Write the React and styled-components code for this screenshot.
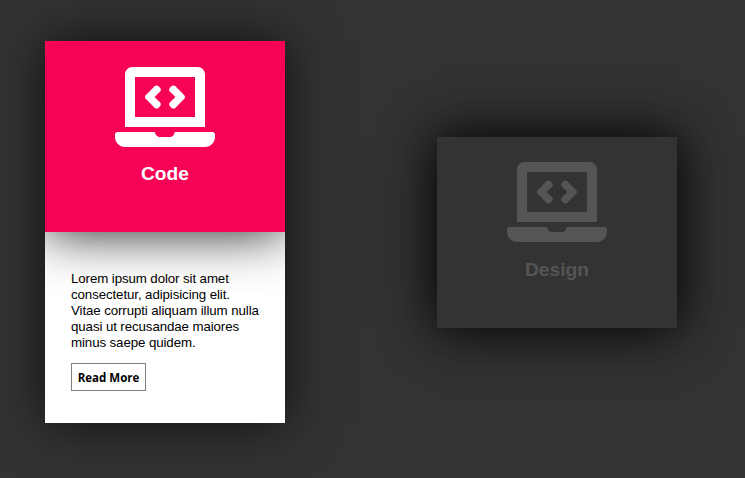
import React from "react";
import styled, { createGlobalStyle } from "styled-components";
import { FaLaptopCode } from "react-icons/fa";

const GlobalStyle = createGlobalStyle`
  * { margin: 0; padding: 0; box-sizing: border-box; }
  body { background: #333; font-family: "Liberation Sans", Arial, sans-serif; }
`;

const Page = styled.main`
  display: flex;
  align-items: center;
  gap: 152px;
  width: 745px;
  height: 478px;
  padding: 0 0 14px 45px;
  overflow: hidden;
`;

const Card = styled.article`
  width: 240px;
  flex: none;
  box-shadow: 0 0 50px rgba(0, 0, 0, ${(p) => (p.$open ? 0.72 : 0.3)});
`;

const Face = styled.header`
  position: relative;
  z-index: 1;
  display: flex;
  flex-direction: column;
  align-items: center;
  height: 191px;
  padding-top: ${(p) => (p.$active ? "16px" : "15px")};
  background: ${(p) => (p.$active ? "#f70356" : "#333")};
  color: ${(p) => (p.$active ? "#fff" : "#555")};
  box-shadow: 0 0 50px rgba(0, 0, 0, 0.9);
  clip-path: ${(p) => (p.$active ? "inset(0 0 -60px 0)" : "none")};
`;

const Icon = styled(FaLaptopCode)`
  width: 100px;
  height: 100px;
`;

const Title = styled.h3`
  margin-top: ${(p) => (p.$active ? "6px" : "7px")};
  font-size: 19.2px;
  line-height: 22px;
`;

const Details = styled.section`
  height: 191px;
  padding: 39px 20px 0 26px;
  background: #fff;
`;

const Copy = styled.p`
  position: relative;
  z-index: 2;
  font-size: 13.3px;
  line-height: 16px;
  letter-spacing: -0.1px;
  white-space: pre-line;
`;

const ReadMore = styled.button`
  display: block;
  width: 75px;
  height: 28px;
  margin-top: 12px;
  border: 1px solid #808080;
  background: #fff;
  color: #000;
  font: bold 11.5px "Open Sans", sans-serif;
`;

const copy = `Lorem ipsum dolor sit amet
consectetur, adipisicing elit.
Vitae corrupti aliquam illum nulla
quasi ut recusandae maiores
minus saepe quidem.`;

export default function App() {
  return (
    <>
      <GlobalStyle />
      <Page>
        <Card $open>
          <Face $active>
            <Icon />
            <Title $active>Code</Title>
          </Face>
          <Details>
            <Copy>{copy}</Copy>
            <ReadMore>Read More</ReadMore>
          </Details>
        </Card>
        <Card>
          <Face>
            <Icon />
            <Title>Design</Title>
          </Face>
        </Card>
      </Page>
    </>
  );
}
